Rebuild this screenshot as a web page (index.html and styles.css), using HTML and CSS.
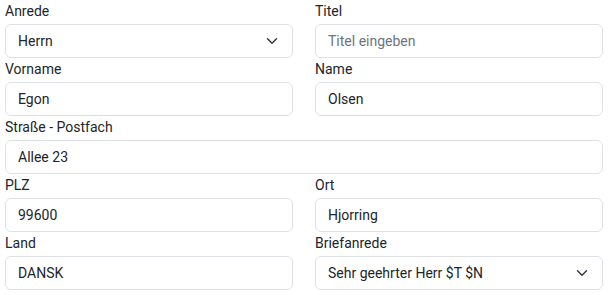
FILE: index.html
```html
<!DOCTYPE html>
<html lang="de">
<head>
  <meta charset="UTF-8">
  <title>Adresse</title>
  <link rel="stylesheet" href="styles.css">
</head>
<body>

  <form class="address-form">
    <div class="field">
      <label for="anrede">Anrede</label>
      <select id="anrede" class="form-select">
        <option>Herrn</option>
        <option>Frau</option>
      </select>
    </div>
    <div class="field">
      <label for="titel">Titel</label>
      <input id="titel" class="form-control" type="text" placeholder="Titel eingeben">
    </div>

    <div class="field">
      <label for="vorname">Vorname</label>
      <input id="vorname" class="form-control" type="text" value="Egon">
    </div>
    <div class="field">
      <label for="name">Name</label>
      <input id="name" class="form-control" type="text" value="Olsen">
    </div>

    <div class="field full">
      <label for="strasse">Straße - Postfach</label>
      <input id="strasse" class="form-control" type="text" value="Allee 23">
    </div>

    <div class="field">
      <label for="plz">PLZ</label>
      <input id="plz" class="form-control" type="text" value="99600">
    </div>
    <div class="field">
      <label for="ort">Ort</label>
      <input id="ort" class="form-control" type="text" value="Hjorring">
    </div>

    <div class="field">
      <label for="land">Land</label>
      <input id="land" class="form-control" type="text" value="DANSK">
    </div>
    <div class="field">
      <label for="briefanrede">Briefanrede</label>
      <select id="briefanrede" class="form-select">
        <option>Sehr geehrter Herr $T $N</option>
      </select>
    </div>
  </form>

</body>
</html>
```
FILE: styles.css
```css
body {
  margin: 0;
  background-color: #fff;
  font-family: Roboto, "Noto Sans", sans-serif;
  font-size: 14px;
  color: #212529;
}

.address-form {
  display: grid;
  grid-template-columns: 288px 288px;
  column-gap: 22px;
  padding-left: 5px;
}

.field {
  display: flex;
  flex-direction: column;
}

.field.full {
  grid-column: 1 / 3;
}

label {
  display: block;
  height: 24px;
  line-height: 23px;
}

.form-control,
.form-select {
  box-sizing: border-box;
  width: 100%;
  height: 34px;
  padding: 0 12px;
  font-family: inherit;
  font-size: 14px;
  color: #212529;
  background-color: #fff;
  border: 1px solid #dee2e6;
  border-radius: 6px;
  outline: none;
}

.form-control::placeholder {
  color: #6c757d;
}

.form-select {
  appearance: none;
  padding-right: 36px;
  background-image: url("data:image/svg+xml,%3csvg xmlns='http://www.w3.org/2000/svg' viewBox='0 0 16 16'%3e%3cpath fill='none' stroke='%23343a40' stroke-linecap='round' stroke-linejoin='round' stroke-width='2' d='m2 5 6 6 6-6'/%3e%3c/svg%3e");
  background-repeat: no-repeat;
  background-position: right 12px center;
  background-size: 16px 12px;
}
```
